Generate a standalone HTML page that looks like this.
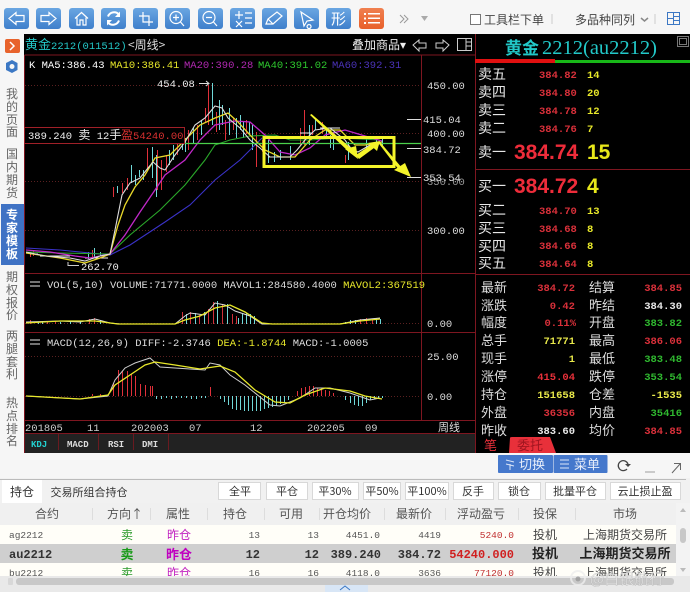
<!DOCTYPE html>
<html><head><meta charset="utf-8"><style>
html,body{margin:0;padding:0;background:#f6f6f6}
svg{display:block;font-family:"Liberation Sans","Noto Sans CJK SC",sans-serif}
.m{font-family:"Liberation Mono","Noto Sans CJK SC",monospace;font-size:10.5px}
.c{font-family:"Noto Sans CJK SC","Liberation Sans",sans-serif;font-size:13px;fill:#ddd}
.t{font-family:"Noto Sans CJK SC","Liberation Sans",sans-serif;font-size:12px;fill:#444}
.p{font-family:"Liberation Mono",monospace;font-size:10.5px;fill:#d9303a;font-weight:bold}
.y{fill:#e8e84a}.r{fill:#d9303a}.g{fill:#2fb82f}.w{fill:#e8e8e8}
.e{text-anchor:end}.mid{text-anchor:middle}
.tb{font-family:"Noto Sans CJK SC",sans-serif;font-size:11px;fill:#333;text-anchor:middle}
.h{font-family:"Noto Sans CJK SC",sans-serif;font-size:12px;fill:#555;text-anchor:middle}
.d{font-family:"Liberation Mono",monospace;font-size:9.5px;fill:#555}
.b{font-family:"Liberation Mono","Noto Sans CJK SC",monospace;font-size:12px;font-weight:bold;fill:#333}
.ic{fill:none;stroke:#fff;stroke-width:1.2}
</style></head><body>
<svg width="690" height="592" viewBox="0 0 690 592" xmlns="http://www.w3.org/2000/svg">
<defs><linearGradient id="bl" x1="0" y1="0" x2="0" y2="1"><stop offset="0" stop-color="#6aa6e2"/><stop offset="1" stop-color="#3f7fcb"/></linearGradient>
<linearGradient id="or" x1="0" y1="0" x2="0" y2="1"><stop offset="0" stop-color="#f08050"/><stop offset="1" stop-color="#e8602a"/></linearGradient></defs>
<rect width="690" height="592" fill="#f6f6f6"/>

<!-- toolbar -->
<g fill="url(#bl)">
<rect x="4" y="8" width="25" height="21" rx="3"/><rect x="36" y="8" width="25" height="21" rx="3"/><rect x="69" y="8" width="25" height="21" rx="3"/><rect x="101" y="8" width="25" height="21" rx="3"/><rect x="133" y="8" width="25" height="21" rx="3"/><rect x="165" y="8" width="25" height="21" rx="3"/><rect x="198" y="8" width="25" height="21" rx="3"/><rect x="230" y="8" width="25" height="21" rx="3"/><rect x="262" y="8" width="25" height="21" rx="3"/><rect x="294" y="8" width="25" height="21" rx="3"/><rect x="326" y="8" width="25" height="21" rx="3"/>
</g>
<rect x="359" y="8" width="25" height="21" rx="3" fill="url(#or)"/>
<path class="ic" d="M9 18.500L16 12.500V15.500H24V21.500H16V24.500ZM56 18.500L49 12.500V15.500H41V21.500H49V24.500ZM75 18.500L81.500 12.500L88 18.500M77 17.500V25H80V20H83V25H86V17.500"/>
<path class="ic" style="stroke-width:2" d="M108 16.500A6.500 6.500 0 0 1 119 14.500M119 20.500A6.500 6.500 0 0 1 108 22.500"/>
<path fill="#fff" d="M120 11.500V17H115ZM107 25.500V20H112Z"/>
<path class="ic" d="M143 12V22H153M139 16H149V26"/>
<circle class="ic" cx="176" cy="17.500" r="6"/><path class="ic" d="M173 17.500H179M176 14.500V20.500M180.500 22L184 26"/>
<circle class="ic" cx="209" cy="17.500" r="6"/><path class="ic" d="M206 17.500H212M213.500 22L217 26"/>
<path class="ic" d="M235 15H243M239 11V19M236 21L242 27M242 21L236 27M245 13H252M245 18H252M245 23H252"/>
<path class="ic" d="M266 24L268 19L277 12L282 16L273 24ZM268 19L273 24"/>
<path class="ic" d="M301 12L313 20L307 21L304 26ZM309 24.500A2 2 0 1 0 309.100 24.500"/>
<text x="331" y="24" font-size="15" fill="#fff" font-family="Noto Sans CJK SC">形</text>
<path fill="#fff" d="M364 13h2v2h-2zM364 17.500h2v2h-2zM364 22h2v2h-2zM368 13h12v1.500h-12zM368 17.500h12v1.500h-12zM368 22h12v1.500h-12z"/>
<path d="M400 15L404 19L400 23M404 15L408 19L404 23" fill="none" stroke="#999"/>
<path d="M421 16H428L424.500 21Z" fill="#aaa"/>
<rect x="470.500" y="14.500" width="10" height="10" fill="#fff" stroke="#777"/>
<text class="t" x="484" y="24">工具栏下单</text>
<path d="M552 14V24M655 14V24" stroke="#ccc"/>
<text class="t" x="575" y="24">多品种同列</text>
<path d="M641 18L644.500 21L648 18" fill="none" stroke="#888" stroke-width="1.500"/>
<rect x="667.500" y="12.500" width="12" height="12" fill="none" stroke="#3c78c4"/><path d="M673.500 12V25M674 16.500H680M674 20.500H680M668 18.500H673" stroke="#3c78c4"/>

<!-- sidebar -->
<rect x="5" y="39" width="15" height="14" rx="2" fill="#e8632c"/><path d="M10 42L14 46L10 50" fill="none" stroke="#fff" stroke-width="1.500"/>
<path d="M12 60L17.500 63V70L12 73L6 70V63Z" fill="#3c78c4"/><circle cx="12" cy="66.500" r="2.500" fill="#f6f6f6"/>
<rect x="1" y="204" width="23" height="61" fill="#3f72c4"/>
<g class="c" style="fill:#666;font-size:12px">
<text x="6" y="98">我</text><text x="6" y="111">的</text><text x="6" y="124">页</text><text x="6" y="136">面</text>
<text x="6" y="158">国</text><text x="6" y="171">内</text><text x="6" y="184">期</text><text x="6" y="197">货</text>
<text x="6" y="281">期</text><text x="6" y="294">权</text><text x="6" y="307">报</text><text x="6" y="319">价</text>
<text x="6" y="340">两</text><text x="6" y="353">腿</text><text x="6" y="366">套</text><text x="6" y="378">利</text>
<text x="6" y="407">热</text><text x="6" y="420">点</text><text x="6" y="433">排</text><text x="6" y="445">名</text>
</g>
<g class="c" style="fill:#fff;font-weight:bold;font-size:12px">
<text x="6" y="219">专</text><text x="6" y="232">家</text><text x="6" y="245">模</text><text x="6" y="258">板</text>
</g>

<!-- black main -->
<rect x="24" y="34" width="666" height="419" fill="#000"/>
<text x="25" y="49" font-size="13" fill="#23c8c8" font-family="Noto Sans CJK SC">黄金<tspan font-family="Liberation Mono" font-size="10.500">2212(011512)</tspan></text>
<text class="c" x="128" y="49" style="font-size:12px">&lt;周线&gt;</text>
<text class="c" x="352" y="49" style="font-size:12px;fill:#eee">叠加商品▾</text>
<path d="M413 45L419 40V43H426V48H419V51ZM449 45L443 40V43H436V48H443V51Z" fill="none" stroke="#ccc"/>
<rect x="457.500" y="38.500" width="14" height="12" fill="none" stroke="#ccc"/><path d="M466 38V51M466 42H471M466 46H471" stroke="#ccc"/>

<!-- chart frame -->
<g stroke="#7e1620" fill="none">
<path d="M24.500 55H475M421.500 55V420M24.500 55V453M24 273.500H475M24 332.500H475M24 420.500H475M24 433.500H475M475.500 34V453"/>
</g>
<g stroke="#5a2020" stroke-dasharray="1 2"><path d="M25 85.500H421M25 133.500H421M25 181.500H421M25 230.500H421M25 356.500H421M25 396.500H421M25 323.500H421"/></g>

<text class="m" x="29" y="68" fill="#fff">K MA5:386.43</text>
<text class="m" x="110" y="68" fill="#e8e82a">MA10:386.41</text>
<text class="m" x="184" y="68" fill="#b028b0">MA20:390.28</text>
<text class="m" x="258" y="68" fill="#2ec82e">MA40:391.02</text>
<text class="m" x="332" y="68" fill="#4a32b8">MA60:392.31</text>
<text class="m" x="157" y="87" fill="#eee">454.08</text><path d="M199 83.500H209M206 81L209 83.500L206 86" stroke="#ddd" fill="none"/>

<!-- candles -->
<g transform="translate(.5 0)">
<path fill="none" stroke="#e0303a" d="M113 187V197M122 183V193M127 178V190M147 148V170M157 150V190M161 160V190M166 155V172M177 135V155M188 130V150M197 125V140M208 85V125M216 112V132M225 120V140M233 118V130M246 120V134M256 132V167M262 140V152M300 128V145M304 110V145M312 125V135M322 122V134M345 155V163M33 250V256M92 250V258M30 253V257M205 108V122"/>
<path fill="none" stroke="#70d8d8" d="M117 186V193M131 165V183M135 175V185M139 170V177M143 170V180M152 147V178M156 155V197M169 150V165M173 145V160M182 135V150M185 138V152M193 128V143M201 120V135M212 83V125M219 100V130M222 105V125M229 108V135M236 118V138M240 115V130M243 122V138M249 122V135M252 125V150M268 140V163M274 152V162M280 150V160M290 146V160M309 125V145M315 118V130M326 128V138M330 135V148M333 132V150M348 142V160M366 138V150M376 138V148M382 136V146M94 248V258M88 252V259M100 252V256"/>
</g>
<path fill="none" stroke="#eee" d="M268 157H276M276 157H284M284 157H292M300 133H312M320 128H340M85 258H108M40 256H70M30 254H38"/>

<!-- MAs -->
<g fill="none" stroke-width="1.100">
<polyline stroke="#3a32c8" points="26,248 60,250 110,255 130,245 165,222 190,205 215,180 240,160 262,138"/>
<polyline stroke="#2aa82a" points="26,252 60,253 110,254 130,235 160,210 185,185 205,160 215,145 230,140 250,136 275,135 290,140 310,140 340,138 380,140"/>
<polyline stroke="#c028c8" stroke-width="1.300" points="26,250 50,252 75,256 90,258 110,254 125,235 140,212 155,190 165,175 185,160 200,140 215,125 235,121 250,122 265,135 280,152 295,155 310,148 325,135 345,130 365,136 382,141"/>
<polyline stroke="#e8d82a" stroke-width="1.300" points="26,253 60,258 85,263 100,258 110,254 118,225 125,205 135,187 145,175 155,158 170,155 185,140 200,125 215,118 228,113 238,122 250,135 265,150 280,157 295,157 310,140 325,130 340,130 355,145 365,145 382,142"/>
<polyline stroke="#ddd" points="26,252 45,256 70,258 85,261 100,256 110,254 115,230 122,195 130,183 140,178 148,168 153,162 160,168 165,170 175,155 185,142 195,125 205,118 210,112 215,106 222,108 228,118 240,128 250,140 260,148 270,157 290,157 297,150 305,140 315,130 330,128 345,140 352,150 358,152 370,145 380,142"/>
</g>
<path d="M110 143.500H421" stroke="#4ad04a" stroke-width="1.200"/>
<rect x="24.500" y="127.500" width="160" height="16" fill="#000" stroke="#a02028"/>
<text class="m" x="28" y="139" fill="#eee">389.240 <tspan font-size="12">卖</tspan> 12<tspan font-size="12">手</tspan></text>
<text class="m" x="121" y="139" fill="#d93030"><tspan font-size="12">盈</tspan>54240.00</text>
<text class="m" x="81" y="270" fill="#eee">262.70</text><path d="M68 262V266M68 265.500H79" stroke="#ccc" fill="none"/>

<!-- annotation -->
<rect x="264" y="137.500" width="130" height="29" fill="none" stroke="#f4f42a" stroke-width="3"/>
<g fill="#f4f42a">
<path d="M310 115L311.500 114L352 149L349 152Z"/>
<path d="M345 149L356 146L358 159Z"/>
<path d="M356 155L372 144L374 148L359 159Z"/>
<path d="M368 143L380 141L377 151Z"/>
<path d="M378 142.500L380 142L402 168L399 170Z"/>
<path d="M394 170L405 163L411 177Z"/>
</g>

<!-- axis labels -->
<g stroke="#ddd"><path d="M407 119.500H421M407 148.500H421M407 177.500H421"/></g>
<g class="m" fill="#ddd">
<text x="427" y="89">450.00</text><text x="423" y="123">415.04</text><text x="427" y="137">400.00</text><text x="423" y="153">384.72</text>
<text x="427" y="185" fill="#999">350.00</text><text x="423" y="181">353.54</text><text x="427" y="234">300.00</text>
<text x="427" y="327">0.00</text><text x="427" y="360">25.00</text><text x="427" y="400">0.00</text>
</g>

<!-- VOL -->
<path d="M30 282H40M30 286H40" stroke="#999" stroke-width="1.500"/>
<text class="m" x="47" y="288" fill="#ddd">VOL(5,10) VOLUME:71771.0000 MAVOL1:284580.4000 <tspan fill="#e8e82a">MAVOL2:367519</tspan></text>
<g transform="translate(.5 0)">
<path fill="none" stroke="#d0303a" d="M30 320V324M47 322V324M55 321V324M89 319V324M94 318V324M182 312V324M190 312V324M199 315V324M208 309V324M213 302V324M222 304V324M232 314V324M236 316V324M360 319V324M366 318V324M372 319V324"/>
<path fill="none" stroke="#70d8d8" d="M38 322V324M42 321V324M60 322V324M70 321V324M80 321V324M100 320V324M186 314V324M195 313V324M204 312V324M217 301V324M227 304V324M238 318V324M242 314V324M246 313V324M250 314V324M254 316V324M345 322V324M350 320V324M355 320V324M376 318V324M380 319V324"/>
</g>
<polyline fill="none" stroke="#ddd" points="26,322 60,321 80,322 95,319 110,323 120,324 175,324 185,316 190,313 205,315 215,303 225,305 235,311 250,316 262,324 340,324 360,320 380,318"/>
<polyline fill="none" stroke="#e8e82a" stroke-width="1.300" points="26,323 60,321 95,321 118,324 175,324 185,320 200,316 215,308 230,305 245,312 262,323 272,324 340,324 360,321 380,319"/>

<!-- MACD -->
<path d="M30 340H40M30 344H40" stroke="#999" stroke-width="1.500"/>
<text class="m" x="47" y="346" fill="#ddd">MACD(12,26,9) DIFF:-2.3746 <tspan fill="#e8e82a">DEA:-1.8744</tspan> MACD:-1.0005</text>
<g transform="translate(.5 0)">
<path fill="none" stroke="#e0303a" d="M113 383V396M118 370V396M122 371V396M127 371V396M131 374V396M135 376V396M140 384V396M145 385V396M150 386V396M152 386V396M210 387V396M92 394V396M100 394V396M297 391V396M301 388V396M305 387V396M309 386V396M313 386V396M317 388V396M321 389V396M325 390V396M329 391V396M333 393V396"/>
<path fill="none" stroke="#70d8d8" d="M156 396V399M161 396V399M166 396V398M171 396V399M176 396V398M181 396V398M186 396V398M191 396V399M196 396V399M201 396V398M205 396V398M220 396V399M224 396V402M228 396V405M232 396V409M236 396V410M240 396V410M244 396V411M248 396V411M252 396V411M256 396V411M260 396V411M264 396V409M268 396V408M272 396V407M276 396V406M280 396V404M284 396V402M288 396V400M345 396V400M350 396V403M354 396V405M358 396V406M362 396V406M366 396V403M370 396V400M374 396V399M378 396V398M382 396V398"/>
</g>
<polyline fill="none" stroke="#ccc" points="26,396 80,399 108,396 115,380 125,368 135,363 150,358 160,367 190,369 205,370 210,363 220,365 230,375 245,385 270,405 280,406 300,398 315,388 330,388 350,393 370,400 380,398"/>
<polyline fill="none" stroke="#e8e82a" stroke-width="1.300" points="26,396 80,399 108,395 115,385 130,375 145,365 155,362 175,365 200,369 220,366 235,372 255,390 275,402 290,403 305,395 325,388 350,391 365,396 382,399"/>

<!-- dates -->
<g class="m" fill="#ccc"><text x="25" y="431">201805</text><text x="87" y="431">11</text><text x="131" y="431">202003</text><text x="189" y="431">07</text><text x="250" y="431">12</text><text x="307" y="431">202205</text><text x="365" y="431">09</text></g>
<text class="c" x="438" y="431" style="font-size:11px">周线</text>
<rect x="25" y="434" width="450" height="19" fill="#222"/>
<path d="M58.500 434V450M98.500 434V450M133.500 434V450M168.500 434V450" stroke="#6a1a20"/>
<g class="m" font-weight="bold" fill="#ddd" style="font-size:9px"><text x="31" y="447" fill="#22d0d0">KDJ</text><text x="67" y="447">MACD</text><text x="108" y="447">RSI</text><text x="142" y="447">DMI</text></g>

<!-- right panel -->
<text x="505" y="54" font-size="17" fill="#22c8c8" font-family="Noto Sans CJK SC" font-weight="bold">黄金<tspan dx="3" font-family="Liberation Serif" font-size="20.500" font-weight="normal">2212(au2212)</tspan></text>
<rect x="677.500" y="36.500" width="11" height="10" fill="none" stroke="#777"/><rect x="679.500" y="38.500" width="7" height="6" fill="none" stroke="#777"/>
<rect x="475" y="59" width="80" height="4" fill="#e01010"/><rect x="555" y="60" width="135" height="3" fill="#18b818"/>
<path d="M475 169.500H690M475 274.500H690" stroke="#7e1620"/>
<g class="c" style="font-size:14px;fill:#e6e6e6">
<text x="478" y="79">卖五</text><text x="478" y="97">卖四</text><text x="478" y="115">卖三</text><text x="478" y="133">卖二</text><text x="478" y="157">卖一</text>
<text x="478" y="191">买一</text><text x="478" y="215">买二</text><text x="478" y="233">买三</text><text x="478" y="251">买四</text><text x="478" y="268">买五</text>
</g>
<g class="p">
<text x="539" y="78">384.82</text><text x="539" y="96">384.80</text><text x="539" y="114">384.78</text><text x="539" y="132">384.76</text>
<text x="539" y="214">384.70</text><text x="539" y="232">384.68</text><text x="539" y="249">384.66</text><text x="539" y="267">384.64</text>
</g>
<g class="p" style="fill:#e8e82a">
<text x="587" y="78">14</text><text x="587" y="96">20</text><text x="587" y="114">12</text><text x="587" y="132">7</text>
<text x="587" y="214">13</text><text x="587" y="232">8</text><text x="587" y="249">8</text><text x="587" y="267">8</text>
</g>
<text x="514" y="159" font-size="21" font-weight="bold" fill="#ee2c3a">384.74</text><text x="587" y="159" font-size="21" font-weight="bold" fill="#e8e81a">15</text>
<text x="514" y="193" font-size="21" font-weight="bold" fill="#ee2c3a">384.72</text><text x="587" y="193" font-size="21" font-weight="bold" fill="#e8e81a">4</text>

<g class="c" style="font-size:13px;fill:#ddd">
<text x="481" y="292">最新</text><text x="481" y="310">涨跌</text><text x="481" y="327">幅度</text><text x="481" y="345">总手</text><text x="481" y="363">现手</text><text x="481" y="381">涨停</text><text x="481" y="399">持仓</text><text x="481" y="417">外盘</text><text x="481" y="435">昨收</text>
<text x="589" y="292">结算</text><text x="589" y="310">昨结</text><text x="589" y="327">开盘</text><text x="589" y="345">最高</text><text x="589" y="363">最低</text><text x="589" y="381">跌停</text><text x="589" y="399">仓差</text><text x="589" y="417">内盘</text><text x="589" y="435">均价</text>
</g>
<g class="p e">
<text x="575" y="291">384.72</text><text x="575" y="309">0.42</text><text x="576" y="326">0.11%</text>
<text x="575" y="344" class="y">71771</text><text x="575" y="362" class="y">1</text><text x="575" y="380" style="fill:#e8303a">415.04</text><text x="575" y="398" class="y">151658</text><text x="575" y="416">36356</text><text x="575" y="434" class="w">383.60</text>
<text x="682" y="291">384.85</text><text x="682" y="309" class="w">384.30</text><text x="682" y="326" class="g">383.82</text><text x="682" y="344">386.06</text><text x="682" y="362" class="g">383.48</text><text x="682" y="380" class="g">353.54</text><text x="682" y="398" class="y">-1535</text><text x="682" y="416" class="g">35416</text><text x="682" y="434">384.85</text>
</g>
<path d="M509 453L510 438Q510 437 512 437H550L556 453Z" fill="#e8303a"/>
<text class="c" x="484" y="450" style="font-size:13px;fill:#e8303a">笔</text>
<text class="c" x="517" y="450" style="font-size:13px;fill:#a01520">委托</text>

<!-- action row -->
<rect x="498" y="455" width="55" height="18" rx="1" fill="#4578cc"/><rect x="553.500" y="455" width="54" height="18" rx="1" fill="#4578cc"/>
<text class="c" x="519" y="469" style="font-size:13px;fill:#e8eefa">切换</text><text class="c" x="574" y="469" style="font-size:13px;fill:#e8eefa">菜单</text>
<path d="M506 460L514 462M506 464L514 466M510 464V470M560 460H569M560 464H569M560 468H569" stroke="#dce6f8" fill="none"/>
<path d="M628 464A5 5 0 1 0 627 469" fill="none" stroke="#444" stroke-width="1.300"/><path d="M631 464H625L628 467Z" fill="#444"/>
<path d="M645 472H655" stroke="#bbb" stroke-width="1.500"/>
<path d="M672 473L680 464M674 463.500H680.500V470" fill="none" stroke="#666"/>

<!-- bottom panel -->
<rect x="0" y="478" width="690" height="114" fill="#f1f1f1"/>
<path d="M0 479.500H686" stroke="#bbb"/>
<rect x="2" y="480" width="40" height="23" fill="#fff"/>
<text class="tb" x="22" y="496" style="font-size:12px">持仓</text>
<text class="tb" x="89" y="496">交易所组合持仓</text>
<g fill="#fff" stroke="#d8d8d8">
<rect x="218.500" y="482.500" width="42" height="17"/><rect x="266.500" y="482.500" width="41" height="17"/><rect x="312.500" y="482.500" width="46" height="17"/><rect x="363.500" y="482.500" width="37" height="17"/><rect x="405.500" y="482.500" width="43" height="17"/><rect x="453.500" y="482.500" width="40" height="17"/><rect x="498.500" y="482.500" width="42" height="17"/><rect x="545.500" y="482.500" width="60" height="17"/><rect x="610.500" y="482.500" width="70" height="17"/>
</g>
<g class="tb">
<text x="240" y="495">全平</text><text x="287" y="495">平仓</text><text x="335" y="495">平30%</text><text x="382" y="495">平50%</text><text x="427" y="495">平100%</text><text x="473" y="495">反手</text><text x="519" y="495">锁仓</text><text x="575" y="495">批量平仓</text><text x="645" y="495">云止损止盈</text>
</g>
<rect x="0" y="503" width="690" height="22" fill="#f0f0f0"/>
<path d="M92.500 508V520M150.500 508V520M207.500 508V520M264.500 508V520M319.500 508V520M384.500 508V520M445.500 508V520M518.500 508V520M575.500 508V520" stroke="#ddd"/>
<g class="h">
<text x="47" y="518">合约</text><text x="125" y="518">方向↑</text><text x="178" y="518">属性</text><text x="235" y="518">持仓</text><text x="291" y="518">可用</text><text x="347" y="518">开仓均价</text><text x="414" y="518">最新价</text><text x="481" y="518">浮动盈亏</text><text x="545" y="518">投保</text><text x="625" y="518">市场</text>
</g>
<rect x="0" y="525" width="676" height="19" fill="#fffef8"/>
<rect x="0" y="544" width="676" height="19" fill="#cfcfcf"/>
<rect x="0" y="563" width="676" height="13" fill="#fffef8"/>
<g class="d">
<text x="9" y="538">ag2212</text><text x="260" y="538" class="e">13</text><text x="319" y="538" class="e">13</text><text x="380" y="538" class="e">4451.0</text><text x="441" y="538" class="e">4419</text><text x="514" y="538" class="e" style="fill:#c03030">5240.0</text>
</g>
<g font-size="12" font-family="Noto Sans CJK SC" text-anchor="middle">
<text x="127" y="539" fill="#2a9a2a">卖</text><text x="179" y="539" fill="#c020c0">昨仓</text><text x="545" y="539" fill="#444">投机</text><text x="625" y="539" fill="#444">上海期货交易所</text>
<text x="127" y="559" fill="#189a18" font-weight="bold" style="font-size:13px">卖</text><text x="179" y="559" fill="#c000c0" font-weight="bold" style="font-size:13px">昨仓</text><text x="545" y="558" fill="#222" font-weight="bold" style="font-size:13px">投机</text><text x="625" y="558" fill="#222" font-weight="bold" style="font-size:13px">上海期货交易所</text>
</g>
<g class="b">
<text x="9" y="558">au2212</text><text x="260" y="558" class="e">12</text><text x="319" y="558" class="e">12</text><text x="381" y="558" class="e">389.240</text><text x="441" y="558" class="e">384.72</text><text x="514" y="558" class="e" style="fill:#d02020">54240.000</text>
</g>
<svg x="0" y="563" width="676" height="13" viewBox="0 563 676 13">
<g class="d"><text x="9" y="576">bu2212</text><text x="260" y="576" class="e">16</text><text x="319" y="576" class="e">16</text><text x="380" y="576" class="e">4118.0</text><text x="441" y="576" class="e">3636</text><text x="514" y="576" class="e" style="fill:#c03030">77120.0</text></g>
<g font-size="12" font-family="Noto Sans CJK SC" text-anchor="middle"><text x="127" y="577" fill="#2a9a2a">卖</text><text x="179" y="577" fill="#c020c0">昨仓</text><text x="545" y="577" fill="#444">投机</text><text x="625" y="577" fill="#444">上海期货交易所</text></g>
</svg>
<rect x="676" y="503" width="14" height="73" fill="#f3f3f3"/>
<path d="M680 512L683 508L686 512Z" fill="#bbb"/><rect x="680" y="528" width="6" height="15" rx="3" fill="#c8c8c8"/><path d="M680 568L683 572L686 568Z" fill="#bbb"/>
<rect x="0" y="576" width="690" height="16" fill="#e9e9e9"/>
<rect x="16" y="578" width="658" height="7" rx="3" fill="#c8c8c8"/>
<rect x="8" y="578" width="5" height="7" rx="1" fill="#d8d8d8"/>
<rect x="325" y="585" width="43" height="7" fill="#d8e6f6"/><path d="M340 590L345 586L350 590" fill="none" stroke="#3c78c4"/>
<g opacity=".8"><circle cx="578" cy="578" r="7" fill="none" stroke="#eee" stroke-width="2"/><circle cx="578" cy="579" r="2.500" fill="#999"/>
<text x="590" y="584" font-size="15" font-family="Noto Sans CJK SC" fill="#eee" stroke="#aaa" stroke-width=".3">@白银航行</text></g>
</svg>
</body></html>
